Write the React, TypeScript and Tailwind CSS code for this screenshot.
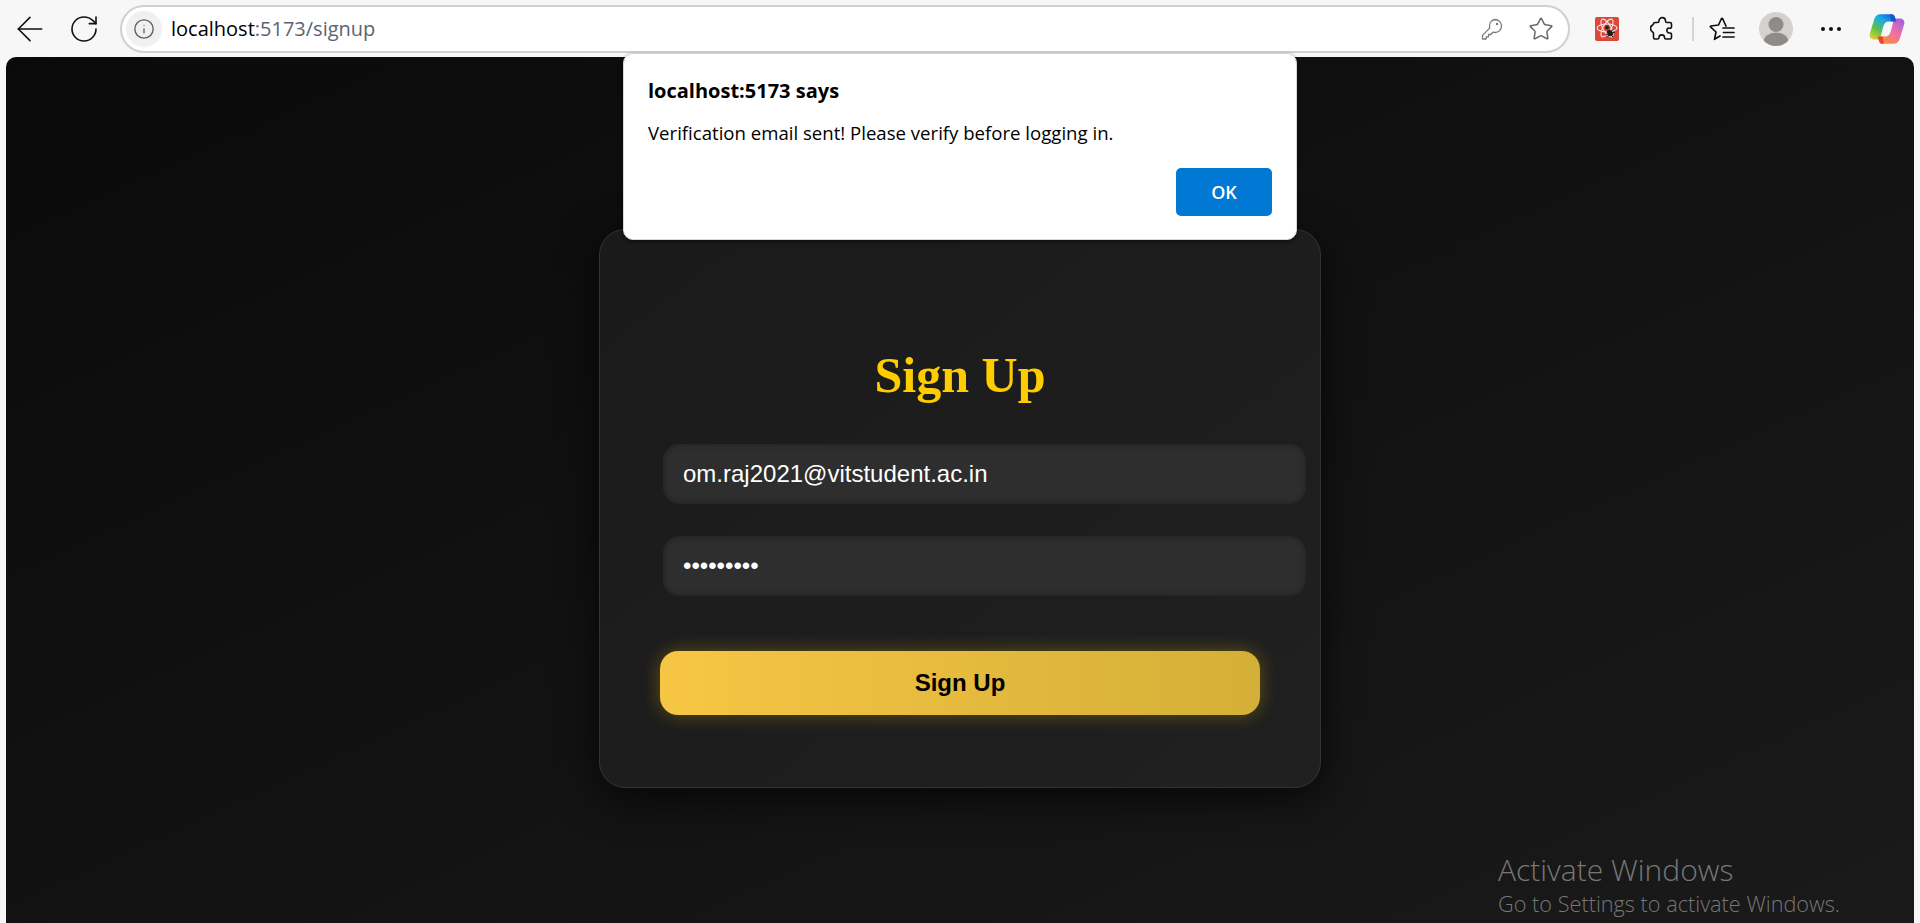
import React from 'react';
import { ArrowLeft, RotateCw, Info, Star } from 'lucide-react';

function KeyIcon() {
    return (
        <svg width="24" height="24" viewBox="0 0 24 24" fill="none" stroke="#7a7a7a" strokeWidth="1.3" strokeLinejoin="round">
            <path d="M15 2.500a6.500 6.500 0 0 1 0 13c-.7 0-1.400-.1-2-.3L10.800 17.500H8.500v2.300H6.200V22H2.500v-3.600l7.200-7.300c-.2-.6-.2-1.400-.2-2.100A6.500 6.500 0 0 1 15 2.500Z" />
            <circle cx="17" cy="7" r="1.200" fill="#7a7a7a" stroke="none" />
        </svg>
    );
}

function PuzzleIcon() {
    return (
        <svg width="24" height="26" viewBox="0 0 24 26" fill="none" stroke="#111" strokeWidth="1.600" strokeLinejoin="round">
            <path d="M9 5c0-4.500 6.500-4.500 6.500 0 0 1 .5 1.500 1.500 1.500h3c1 0 1.500.5 1.500 1.500v3c0 1-1 1.500-2 1.200-3.500-1-3.500 5.300 0 4.800 1-.1 2 .3 2 1.300v3.200c0 1-.5 1.500-1.500 1.500h-4c-1 0-1.500-.5-1.500-1.500 0-3.500-5.500-3.500-5.500 0 0 1-.5 1.500-1.500 1.500H5c-1 0-1.500-.5-1.500-1.500v-4c0-1-1-1.500-1.500-2-2-2-2-4.500 0-6 .5-.5 1.500-1 1.500-2V8c0-1 .5-1.500 1.500-1.500H7.500C8.500 6.500 9 6 9 5Z" />
        </svg>
    );
}

function FavoritesIcon() {
    return (
        <svg width="26" height="24" viewBox="0 0 26 24" fill="none" stroke="#111" strokeWidth="1.700" strokeLinejoin="round" strokeLinecap="round">
            <path d="M17 9 13.500 1.500a.6.6 0 0 0-1 0L9.500 8 1.800 9a.5.5 0 0 0-.3.9L7 15 5.500 22.300 11 19" />
            <path d="M14 11H25M14.500 15.500H25M14 20H25" />
        </svg>
    );
}

function ExtensionIcon() {
    return (
        <svg width="24" height="24" viewBox="0 0 24 24">
            <rect width="24" height="24" rx="2" fill="#d9483b" />
            <g fill="none" stroke="#f7e6e2" strokeWidth="1.100">
                <ellipse cx="12" cy="11" rx="10" ry="4" />
                <ellipse cx="12" cy="11" rx="10" ry="4" transform="rotate(60 12 11)" />
                <ellipse cx="12" cy="11" rx="10" ry="4" transform="rotate(120 12 11)" />
            </g>
            <circle cx="12" cy="10.500" r="2" fill="#222" />
            <ellipse cx="15" cy="16" rx="2.500" ry="3.500" fill="#1c1c1c" transform="rotate(-35 15 16)" />
            <path d="M12 14 18 20M18 12.500 12.500 20M10.500 18 20 15" stroke="#1c1c1c" strokeWidth="1" />
        </svg>
    );
}

function AvatarIcon() {
    return (
        <svg width="34" height="34" viewBox="0 0 34 34">
            <defs>
                <clipPath id="avatar-clip">
                    <circle cx="17" cy="17" r="17" />
                </clipPath>
            </defs>
            <circle cx="17" cy="17" r="17" fill="#d3d2ce" />
            <g clipPath="url(#avatar-clip)" fill="#8f8c87">
                <circle cx="17" cy="12.500" r="7.500" />
                <ellipse cx="17" cy="30" rx="12.500" ry="9.500" />
            </g>
        </svg>
    );
}

function CopilotIcon() {
    return (
        <svg width="36" height="34" viewBox="0 0 34 32">
            <defs>
                <linearGradient id="cp-a" x1="0" y1="1" x2="0.7" y2="0">
                    <stop offset="0" stopColor="#f7d530" />
                    <stop offset="0.4" stopColor="#5cc24a" />
                    <stop offset="0.75" stopColor="#18ace8" />
                    <stop offset="1" stopColor="#1668d8" />
                </linearGradient>
                <linearGradient id="cp-b" x1="0.9" y1="0" x2="0.2" y2="1">
                    <stop offset="0" stopColor="#a05fe8" />
                    <stop offset="0.5" stopColor="#f070a8" />
                    <stop offset="1" stopColor="#f9932a" />
                </linearGradient>
            </defs>
            <path d="M11 2h10c2 0 3 1 3.500 3L26 9h-7c-3 0-4.500 1.500-5.500 4.500L11 23c-.5 2-2 3-4 3H5C1.500 26 0 23.500.8 20.500L5 6.500C6 3.500 8 2 11 2Z" fill="url(#cp-a)" />
            <path d="M23 30H13c-2 0-3-1-3.500-3L8 23h7c3 0 4.500-1.500 5.500-4.500L23 9c.5-2 2-3 4-3h2c3.500 0 5 2.500 4.200 5.500L29 25.500C28 28.500 26 30 23 30Z" fill="url(#cp-b)" />
            <path d="M20 2h1c2 0 3 1 3.500 3L26 9h-5Z" fill="#1a55c8" />
            <path d="M14 30h-1c-2 0-3-1-3.500-3L8 23h5Z" fill="#e8482a" />
        </svg>
    );
}

function Toolbar() {
    return (
        <div className="flex h-[57px] shrink-0 items-center bg-[#f7f7f7]">
            <div className="flex w-[60px] shrink-0 justify-center">
                <ArrowLeft size={40} strokeWidth={0.95} className="shrink-0 text-[#111]" />
            </div>
            <div className="flex w-[48px] shrink-0 justify-center">
                <RotateCw size={32} strokeWidth={1.2} className="shrink-0 text-[#111]" />
            </div>
            <div className="ml-[12px] flex h-[48px] w-[1450px] shrink-0 items-center rounded-full border-2 border-[#d0d0d0] bg-white pl-[4px] pr-[14px]">
                <div className="flex h-[36px] w-[36px] items-center justify-center rounded-full bg-[#f0f0f0]">
                    <Info size={22} strokeWidth={1.5} className="text-[#5f5f5f]" />
                </div>
                <div className="ml-[9px] flex-1 font-['Open_Sans',sans-serif] text-[20px] text-black">
                    localhost<span className="text-[#5a6472]">:5173/signup</span>
                </div>
                <KeyIcon />
                <div className="ml-[24px]">
                    <Star size={26} strokeWidth={1.4} className="text-[#6a6a6a]" />
                </div>
            </div>
            <div className="ml-[25px]"><ExtensionIcon /></div>
            <div className="ml-[31px]"><PuzzleIcon /></div>
            <div className="ml-[18px] h-[24px] w-[2px] bg-[#d4d4d4]" />
            <div className="ml-[15px]"><FavoritesIcon /></div>
            <div className="ml-[24px]"><AvatarIcon /></div>
            <div className="ml-[28px] flex gap-[4px]">
                <span className="h-[4px] w-[4px] rounded-full bg-[#111]" />
                <span className="h-[4px] w-[4px] rounded-full bg-[#111]" />
                <span className="h-[4px] w-[4px] rounded-full bg-[#111]" />
            </div>
            <div className="ml-[28px]"><CopilotIcon /></div>
        </div>
    );
}

function AlertDialog() {
    return (
        <div className="absolute left-[623px] top-[53px] z-10 flex h-[187px] w-[674px] flex-col rounded-[10px] border border-[#d8d8d8] bg-white pl-[24px] pr-[24px] pt-[23px] font-['Open_Sans',sans-serif] text-black shadow-[0_2px_4px_rgba(0,0,0,0.45)]">
            <div className="text-[20px] font-bold leading-[28px]">localhost:5173 says</div>
            <div className="mt-[15px] text-[18.600px] leading-[26px]">Verification email sent! Please verify before logging in.</div>
            <div className="mt-[22px] flex justify-end">
                <button className="h-[48px] w-[96px] rounded-[5px] bg-[#0078d4] text-[18px] font-semibold text-white">OK</button>
            </div>
        </div>
    );
}

function SignupCard() {
    return (
        <div className="flex h-[559px] w-[722px] flex-col rounded-[26px] border border-[#333] bg-gradient-to-br from-[#1a1a1a] to-[#202020] px-[60px] pt-[111px] shadow-[0_10px_40px_rgba(0,0,0,0.7)]">
            <h1 className="text-center font-['Liberation_Serif',serif] text-[50px] font-bold leading-[68px] text-[#ffcc00]">Sign Up</h1>
            <input
                readOnly
                type="email"
                value="om.raj2021@vitstudent.ac.in"
                className="ml-[3px] mt-[35px] h-[60px] w-[643px] shrink-0 rounded-[16px] bg-[#2e2e2e] px-[20px] font-['Liberation_Sans',sans-serif] text-[24px] text-white shadow-[inset_0_0_6px_rgba(0,0,0,0.35)] outline-none"
            />
            <input
                readOnly
                type="password"
                value="password1"
                className="ml-[3px] mt-[32px] h-[60px] w-[643px] shrink-0 rounded-[16px] bg-[#2e2e2e] px-[20px] font-['Liberation_Sans',sans-serif] text-[24px] text-white shadow-[inset_0_0_6px_rgba(0,0,0,0.35)] outline-none"
            />
            <button className="mt-[55px] h-[64px] w-[600px] shrink-0 rounded-[18px] bg-gradient-to-r from-[#f7c644] to-[#d4af37] font-['Liberation_Sans',sans-serif] text-[24px] font-bold text-black shadow-[0_0_18px_rgba(255,204,0,0.3)]">
                Sign Up
            </button>
        </div>
    );
}

export default function App() {
    return (
        <div className="relative flex h-screen flex-col overflow-hidden bg-[#f7f7f7]">
            <Toolbar />
            <main className="relative mx-[6px] flex flex-1 justify-center overflow-hidden rounded-t-[10px] bg-gradient-to-br from-[#0a0a0a] to-[#1a1a1a] pt-[172px]">
                <SignupCard />
                <div className="absolute bottom-[4px] left-[1492px] whitespace-nowrap font-['Open_Sans',sans-serif] font-light text-[#777777]">
                    <div className="text-[30px] leading-[38px]">Activate Windows</div>
                    <div className="text-[21.700px] leading-[30px]">Go to Settings to activate Windows.</div>
                </div>
            </main>
            <AlertDialog />
        </div>
    );
}
